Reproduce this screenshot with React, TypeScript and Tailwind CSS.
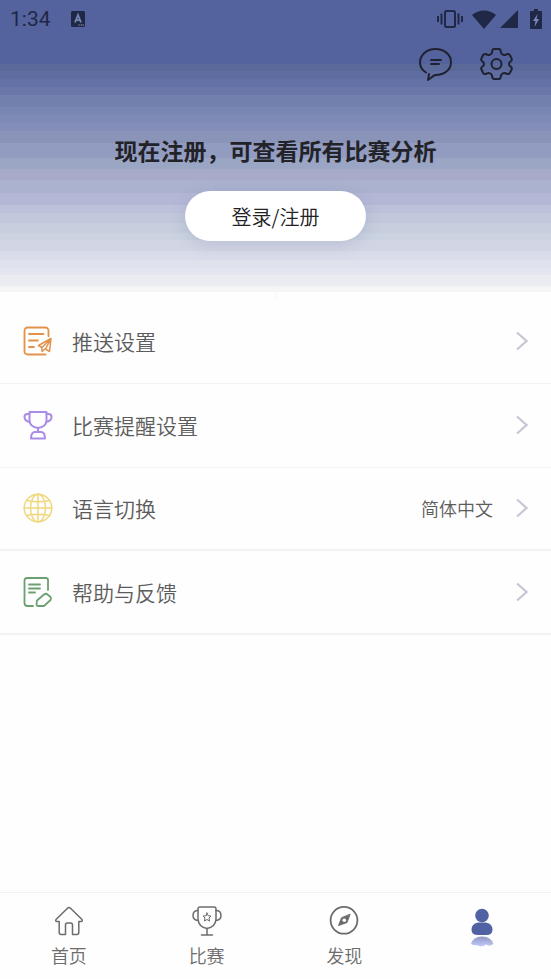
import type { ReactNode } from "react";

const stroke = {
  fill: "none",
  stroke: "currentColor",
  strokeLinecap: "round" as const,
  strokeLinejoin: "round" as const,
};

function StatusBar() {
  return (
    <div className="flex h-[38px] items-center justify-between pl-[10px] pr-[9px] font-[Roboto,sans-serif] text-[#1f2847]">
      <div className="flex items-center gap-5">
        <span className="text-[21px] leading-[38px] font-normal">1:34</span>
        <svg viewBox="0 0 15 16" className="h-4 w-[15px]">
          <rect width="14" height="16" rx="1.5" fill="currentColor" />
          <path d="M4 11.5 L7 4 L10 11.5 M5 9.2 H9" fill="none" stroke="#7785b5" strokeWidth="1.8" />
          <path d="M7.5 14h1.2M9.7 14h1.2M11.7 14h1.2" stroke="#a5afd2" strokeWidth="1" />
        </svg>
      </div>
      <div className="flex items-center">
        <svg viewBox="0 0 26 20" className="mr-[9px] h-5 w-[26px]">
          <rect x="8" y="2" width="10" height="16" rx="1.5" fill="none" stroke="currentColor" strokeWidth="2" />
          <path d="M1 7v6M4.5 4.500v11M21.500 4.500v11M25 7v6" stroke="currentColor" strokeWidth="2" />
        </svg>
        <svg viewBox="0 0 24 19" className="mr-1 h-[19px] w-6">
          <path d="M0 5 C7 -1 17 -1 24 5 L12 19Z" fill="currentColor" />
        </svg>
        <svg viewBox="0 0 18 18" className="mr-3 h-[18px] w-[18px]">
          <path d="M18 0V18H0Z" fill="currentColor" />
        </svg>
        <svg viewBox="0 0 12 20" className="h-5 w-3">
          <path d="M4 0h4v2h3a1 1 0 0 1 1 1v16a1 1 0 0 1-1 1H1a1 1 0 0 1-1-1V3a1 1 0 0 1 1-1h3Z" fill="currentColor" />
          <path d="M7.500 5 3 12h2.500l-1 6L9 10H6.500Z" fill="#7c89b8" />
        </svg>
      </div>
    </div>
  );
}

function ChatIcon() {
  return (
    <svg viewBox="0 0 34 34" className="h-[34px] w-[34px]" {...stroke} strokeWidth="2">
      <path d="M8 25.500 C4 23 2 19.500 2 15.500 C2 8 8.500 2 17.500 2 C26.500 2 33 8 33 15 C33 22.500 27 28 17.500 28 Q15.500 28.500 14 30 L10 33 L11 27" />
      <path d="M13 13h10M13 17h8" />
    </svg>
  );
}

function GearIcon() {
  return (
    <svg viewBox="0 0 34 34" className="h-[34px] w-[34px]" {...stroke} strokeWidth="2">
      <path d="M14 2H19Q20.300 2 20.600 3.500L21 5.500Q21.500 7 23 7.600Q24 8.300 25.500 7.800L27.500 7Q29 6.600 29.800 8L31.600 11.500Q32.200 13 31.100 14L29.600 15.200Q28.600 17 29.600 18.800L31.100 20Q32.200 21 31.600 22.500L29.800 26Q29 27.400 27.500 27L25.500 26.200Q24 25.700 23 26.400Q21.500 27 21 28.500L20.600 30.500Q20.300 32 19 32H14Q12.700 32 12.400 30.500L12 28.500Q11.500 27 10 26.400Q9 25.700 7.500 26.200L5.500 27Q4 27.400 3.200 26L1.400 22.500Q.8 21 1.900 20L3.400 18.800Q4.400 17 3.400 15.200L1.900 14Q.8 13 1.400 11.500L3.200 8Q4 6.600 5.500 7L7.500 7.800Q9 8.300 10 7.600Q11.500 7 12 5.500L12.400 3.500Q12.700 2 14 2Z" />
      <circle cx="16.500" cy="17" r="5" />
    </svg>
  );
}

function PushIcon() {
  return (
    <svg viewBox="0 0 30 30" className="h-[30px] w-[30px] text-[#e2924a]" {...stroke} strokeWidth="1.800">
      <path d="M25.500 10V5Q25.500 1.500 22 1.500H5Q1.500 1.500 1.500 5V25Q1.500 28.500 5 28.500H22.500" />
      <path d="M6 8H20.500M6 14.500H15M6 21H11" />
      <path d="M28 12.500 15.500 19.500 19 21.500 28 12.500 26.500 25.500 22.500 23 28 12.500M19 21.500V25.500L22 23" strokeWidth="1.500" />
    </svg>
  );
}

function CupIcon() {
  return (
    <svg viewBox="0 0 30 30" className="h-[30px] w-[30px] text-[#a98be8]" {...stroke} strokeWidth="2">
      <path d="M6.500 2H23.500V11Q23 17 15 18Q7 17 6.500 11Z" />
      <path d="M6.500 4H4.500Q1.500 4 1.500 7Q1.500 11 7 12M23.500 4H25.500Q28.500 4 28.500 7Q28.500 11 23 12M15 18V21.500" />
      <path d="M8 28.500Q8 22 12 22H18Q22 22 22 28.500Z" />
    </svg>
  );
}

function GlobeIcon() {
  return (
    <svg viewBox="0 0 30 30" className="h-[30px] w-[30px] text-[#efd87b]" {...stroke} strokeWidth="1.500">
      <circle cx="15" cy="15" r="13.800" />
      <ellipse cx="15" cy="15" rx="7.500" ry="13.800" />
      <path d="M15 1.200V28.800M1.200 15H28.800M4 7.500Q15 10 26 7.500M4 22.500Q15 20 26 22.500" />
    </svg>
  );
}

function FeedbackIcon() {
  return (
    <svg viewBox="0 0 30 30" className="h-[30px] w-[30px] text-[#6da071]" {...stroke} strokeWidth="1.800">
      <path d="M25 13V3Q25 1 23 1H4Q1.500 1 1.500 3.500V26Q1.500 29 4.500 29H10" />
      <path d="M6 7.500H17M6 11.500H17M6 15.500H12" />
      <path d="M14 23.500 21 17.500Q23 16 24.500 17.500L27.500 20Q28.500 21.500 27.500 23L21 29H15Q13.500 29 13.500 27.500Z" />
    </svg>
  );
}

function Chevron() {
  return (
    <svg viewBox="0 0 12 20" className="h-5 w-3 text-[#c5c8d4]" fill="none" stroke="currentColor" strokeWidth="2.200">
      <path d="M1 1.500 10.500 10 1 18.500" />
    </svg>
  );
}

function HomeIcon() {
  return (
    <svg viewBox="0 0 30 30" className="h-[30px] w-[30px]" {...stroke} strokeWidth="1.500">
      <path d="M13.500 2.200Q15 1 16.500 2.200L28 13.500Q29 15.500 27 15.500H24.800V26.500Q24.800 28.500 22.800 28.500H18.500V19Q18.500 17 16.500 17H13.500Q11.500 17 11.500 19V28.500H7.200Q5.200 28.500 5.200 26.500V15.500H3Q1 15.500 2 13.500Z" />
    </svg>
  );
}

function MatchIcon() {
  return (
    <svg viewBox="0 0 30 30" className="h-[30px] w-[30px]" {...stroke} strokeWidth="1.500">
      <path d="M8 1H22Q24 1 24 3V13Q23.500 21 15 22.500Q6.500 21 6 13V3Q6 1 8 1Z" />
      <path d="M6 4.500Q1 4.500 1 9.500Q1 14 6 14.500M24 4.500Q29 4.500 29 9.500Q29 14 24 14.500M15 22.500V29M9.500 29H20.500" />
      <path d="M15 7 16.200 9.800 19 10 17 12 17.600 15 15 13.500 12.400 15 13 12 11 10 13.800 9.800Z" strokeWidth="1" />
    </svg>
  );
}

function CompassIcon() {
  return (
    <svg viewBox="0 0 30 30" className="h-[30px] w-[30px]" {...stroke} strokeWidth="1.800">
      <circle cx="15" cy="14.300" r="13.400" />
      <path d="M21 8.500 18 16.500 9.500 19.500 12.500 12Z" fill="currentColor" strokeWidth="1" />
      <circle cx="15.300" cy="14.200" r="1.800" fill="#fefefe" stroke="none" />
    </svg>
  );
}

function PersonIcon() {
  return (
    <svg viewBox="0 0 24 40" className="h-10 w-6" fill="#5062a3">
      <defs>
        <linearGradient id="fade" x1="0" y1="0" x2="0" y2="1">
          <stop offset="0" stopColor="#8e98c4" />
          <stop offset="1" stopColor="#c4cafa" />
        </linearGradient>
      </defs>
      <circle cx="12" cy="7.500" r="6.800" />
      <path d="M8 14.500H16Q22.500 16 22.500 21.500Q22.500 27 16 27H8Q1.500 27 1.500 21.500Q1.500 16 8 14.500Z" />
      <path d="M1 36Q3 28.500 12 28.500Q21 28.500 23.500 36Q19 39 16 36.500Q11 40 7 37Q4 38 1 36Z" fill="url(#fade)" />
    </svg>
  );
}

type Row = { label: string; icon: ReactNode; size: string; value?: string };

const rows: Row[] = [
  { label: "推送设置", icon: <PushIcon />, size: "h-[84px] border-b" },
  { label: "比赛提醒设置", icon: <CupIcon />, size: "h-[84px] border-b" },
  { label: "语言切换", icon: <GlobeIcon />, size: "h-[83px] border-b-2", value: "简体中文" },
  { label: "帮助与反馈", icon: <FeedbackIcon />, size: "h-[84px] border-b-2" },
];

const tabs = [
  { label: "首页", icon: <HomeIcon /> },
  { label: "比赛", icon: <MatchIcon /> },
  { label: "发现", icon: <CompassIcon /> },
];

export default function App() {
  return (
    <div className="flex min-h-screen flex-col bg-[#fefefe] font-['Noto_Sans_CJK_SC',sans-serif] font-[350]">
      <header className="bg-[linear-gradient(#54639d_0_64px,#5a689a_64px_71px,#5f6da1_71px_79px,#6272a6_79px_87px,#6b77a9_87px_95px,#7280ad_95px_107px,#7886b2_107px_115px,#7c8ab5_115px_123px,#828eb8_123px_131px,#8a93b8_131px_143px,#929bc0_143px_158px,#9ba5c4_158px_169px,#a8aac9_169px_180px,#abb2cf_180px_193px,#b4b8d6_193px_205px,#bdc1da_205px_213px,#c2c7dc_213px_223px,#c7cede_223px_233px,#cbd3e1_233px_240px,#d2d6e4_240px_251px,#d9dce9_251px_260px,#dfe2ec_260px_268px,#e3e5ef_268px_275px,#ebecf1_275px_286px,#f5f5f6_286px)] pb-[51px]">
        <StatusBar />
        <div className="flex justify-end gap-7 pt-[9px] pr-[37px] text-[#1f2230]">
          <button aria-label="消息"><ChatIcon /></button>
          <button aria-label="设置"><GearIcon /></button>
        </div>
        <h1 className="pt-[52px] text-center text-[23px] leading-[34px] font-bold text-[#222328]">
          现在注册，可查看所有比赛分析
        </h1>
        <div className="flex justify-center pt-6">
          <button className="h-[50px] w-[181px] rounded-full bg-white pt-[2px] text-xl text-[#222] shadow-[0_4px_16px_rgba(80,95,150,0.18)]">
            登录/注册
          </button>
        </div>
      </header>

      <main className="grow">
        <div className="mx-auto h-2 w-px bg-[#f4f4f4]" />
        <ul>
          {rows.map((row) => (
            <li key={row.label}>
              <button className={`flex w-full items-center border-[#f3f3f4] pr-[23px] pb-px pl-[23px] text-left text-[#5c5c5c] ${row.size}`}>
                {row.icon}
                <span className="grow pl-[19px] text-[21px] leading-8">{row.label}</span>
                {row.value && <span className="pr-[23px] text-lg">{row.value}</span>}
                <Chevron />
              </button>
            </li>
          ))}
        </ul>
      </main>

      <nav className="grid h-[87px] grid-cols-4 border-t border-[#f1f1f2] text-[#6c6c6c]">
        {tabs.map((tab) => (
          <button key={tab.label} className="flex flex-col items-center pt-[13px]">
            {tab.icon}
            <span className="pt-[5px] text-lg leading-7">{tab.label}</span>
          </button>
        ))}
        <button aria-label="我的" className="flex flex-col items-center pt-[15px]">
          <PersonIcon />
        </button>
      </nav>
    </div>
  );
}
